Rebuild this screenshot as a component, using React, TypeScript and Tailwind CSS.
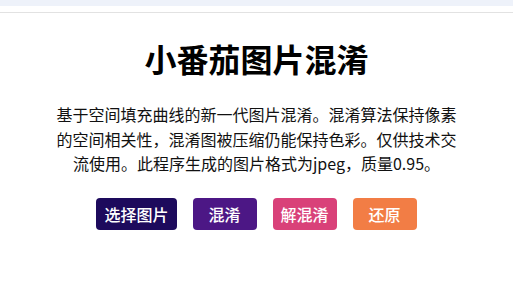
const buttons = [
  { label: "选择图片", color: "bg-[#1d0a5c]" },
  { label: "混淆", color: "bg-[#4c1785]" },
  { label: "解混淆", color: "bg-[#d94179]" },
  { label: "还原", color: "bg-[#f27d45]" },
];

const App = () => {
  return (
    <div
      className="min-h-[291px] bg-white text-black"
      style={{ fontFamily: '"Noto Sans CJK SC", "Noto Sans", sans-serif' }}
    >
      <div className="h-[6px] bg-[#eef2fa]" />
      <div className="h-[6px]" />
      <div className="h-px bg-[#e2e2e2]" />

      <main className="flex flex-col items-center">
        <h1 className="mt-[21px] text-[32px] font-bold leading-[48px]">
          小番茄图片混淆
        </h1>
        <p className="mt-[20px] w-[404px] text-center text-[16px] leading-[24.5px] text-[#111]">
          基于空间填充曲线的新一代图片混淆。混淆算法保持像素的空间相关性，混淆图被压缩仍能保持色彩。仅供技术交流使用。此程序生成的图片格式为jpeg，质量0.95。
        </p>
        <div className="mt-[22px] flex gap-4">
          {buttons.map((b) => (
            <button
              key={b.label}
              className={`${b.color} h-[32px] min-w-[64px] rounded px-2 text-[16px] font-medium text-white`}
            >
              {b.label}
            </button>
          ))}
        </div>
      </main>
    </div>
  );
};

export default App;
